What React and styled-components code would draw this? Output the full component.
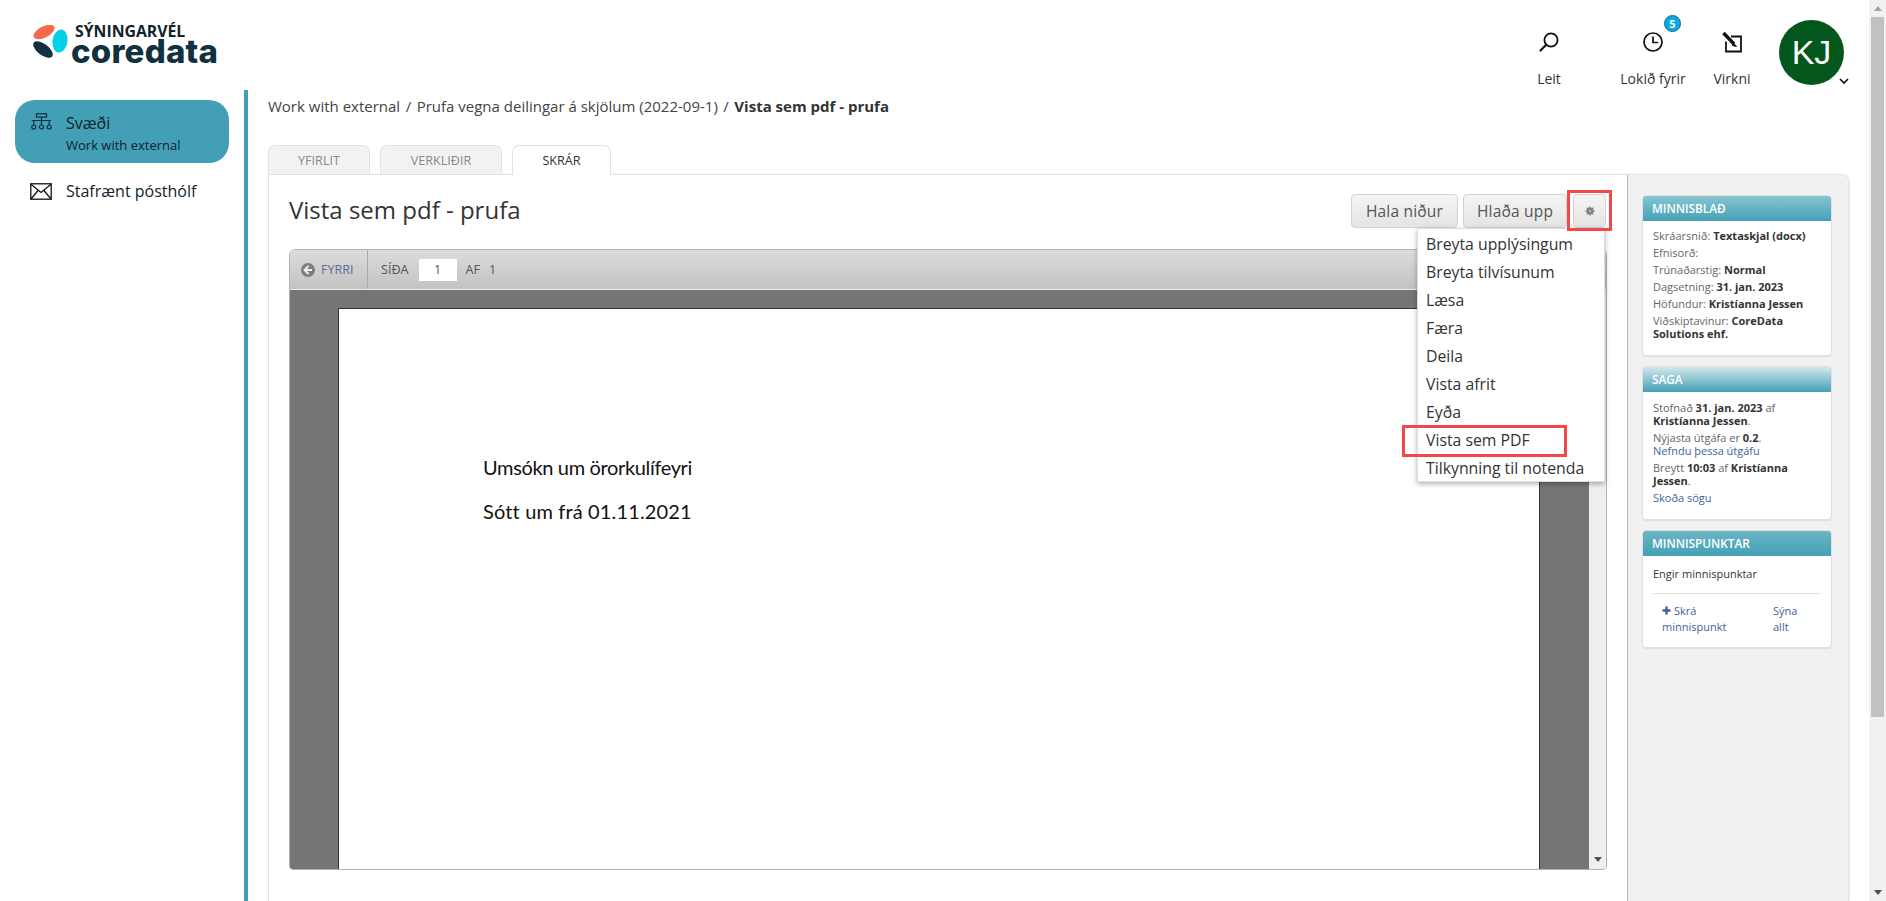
import React from 'react'
import styled, { createGlobalStyle } from 'styled-components'

const GlobalStyle = createGlobalStyle`
  html, body { margin: 0; padding: 0; height: 100%; overflow: hidden; background: #fff; }
  body { font-family: "Open Sans", "Noto Sans", sans-serif; color: #333; }
  * { box-sizing: border-box; }
`

const menuItems = ['Breyta upplýsingum', 'Breyta tilvísunum', 'Læsa', 'Færa', 'Deila', 'Vista afrit', 'Eyða', 'Vista sem PDF', 'Tilkynning til notenda']

const SearchIcon = () => (
  <svg width="22" height="22" viewBox="0 0 22 22" fill="none" stroke="#111" strokeWidth="1.8" strokeLinecap="round">
    <circle cx="13" cy="9" r="6.6" />
    <path d="M8.2 13.8 L2.5 19.5" strokeWidth="2.2" />
  </svg>
)

const ClockIcon = () => (
  <svg width="22" height="22" viewBox="0 0 22 22" fill="none" stroke="#111" strokeWidth="1.7" strokeLinecap="round">
    <circle cx="11" cy="11" r="9" />
    <path d="M11 6 V11.5 H15.5" />
  </svg>
)

const ActivityIcon = () => (
  <svg width="22" height="22" viewBox="0 0 22 22" fill="none" stroke="#111" strokeWidth="1.8">
    <path d="M10 5.5 H20 V20.5 H5 V10.5" />
    <path d="M2.5 2 L13 13" strokeWidth="3.4" />
    <path d="M12.5 12 L15.5 15.5 L11.5 14.5 Z" fill="#111" strokeWidth="1" />
  </svg>
)

const SitemapIcon = () => (
  <svg width="21" height="17" viewBox="0 0 21 17" fill="none" stroke="#10303c" strokeWidth="1.2">
    <rect x="5.5" y="0.7" width="10" height="3.4" />
    <path d="M10.5 4 V12 M0.7 7.5 H20 M2.8 7.5 V12 M18.2 7.5 V12" />
    <circle cx="2.8" cy="14" r="2" />
    <circle cx="10.5" cy="14" r="2" />
    <circle cx="18.2" cy="14" r="2" />
  </svg>
)

const MailIcon = () => (
  <svg width="22" height="17" viewBox="0 0 22 17" fill="none" stroke="#111" strokeWidth="1.3">
    <rect x="0.8" y="0.8" width="20.4" height="15.4" />
    <path d="M1 1.2 L11 9.5 L21 1.2 M1 16 L8 7.5 M21 16 L14 7.5" />
  </svg>
)

const GearIcon = () => (
  <svg width="10" height="10" viewBox="0 0 10 10">
    <circle cx="5" cy="5" r="3.4" fill="#808080" />
    <path d="M5 0.4 V9.6 M0.4 5 H9.6 M1.8 1.8 L8.2 8.2 M8.2 1.8 L1.8 8.2" stroke="#808080" strokeWidth="1.4" />
    <circle cx="5" cy="5" r="1" fill="#ccc" />
  </svg>
)

const BackIcon = () => (
  <svg width="14" height="14" viewBox="0 0 14 14">
    <circle cx="7" cy="7" r="7" fill="#7d7d7d" />
    <path d="M7.5 3 L3.5 7 L7.5 11 M4 7 H11" fill="none" stroke="#eee" strokeWidth="2" />
  </svg>
)

const PlusIcon = () => (
  <svg width="9" height="9" viewBox="0 0 9 9">
    <path d="M4.5 0.5 V8.5 M0.5 4.5 H8.5" stroke="#3f5f9f" strokeWidth="2.4" />
  </svg>
)

const Logo = () => (
  <LogoWrap>
    <svg width="39" height="36" viewBox="0 0 39 36">
      <ellipse cx="11" cy="7" rx="11.5" ry="5.6" fill="#f4694a" transform="rotate(-27 11 7)" />
      <ellipse cx="27" cy="16" rx="7.5" ry="11.6" fill="#04d0e8" transform="rotate(8 27 16)" />
      <ellipse cx="10" cy="24.5" rx="11.5" ry="5.6" fill="#12313f" transform="rotate(37 10 24.5)" />
    </svg>
    <LogoText>
      <LogoTop>SÝNINGARVÉL</LogoTop>
      <LogoName>coredata</LogoName>
    </LogoText>
  </LogoWrap>
)

const LogoWrap = styled.div`
  display: flex;
  align-items: flex-start;
  padding: 25px 0 0 33px;
`
const LogoText = styled.div`
  display: flex;
  flex-direction: column;
  margin-top: -1px;
`
const LogoTop = styled.div`
  font-size: 15.8px;
  font-weight: 700;
  line-height: 15px;
  color: #12232c;
  padding-left: 3px;
`
const LogoName = styled.div`
  font-family: Inter, sans-serif;
  font-size: 33px;
  font-weight: 800;
  line-height: 25px;
  color: #12313f;
  letter-spacing: 0.2px;
  margin-left: -1px;
`

const Page = styled.div`
  display: flex;
  width: 1886px;
  height: 901px;
  overflow: hidden;
`
const Shell = styled.div`
  flex: 1;
  display: flex;
  flex-direction: column;
  min-width: 0;
`
const Header = styled.header`
  height: 90px;
  display: flex;
  justify-content: space-between;
`
const Actions = styled.div`
  display: flex;
  padding-right: 25px;
`
const Action = styled.div`
  position: relative;
  width: ${p => p.$w}px;
  display: flex;
  flex-direction: column;
  align-items: center;
  padding-top: 31px;
  font-size: 14px;
  color: #333;
  span { margin-top: 17px; line-height: 18px; white-space: nowrap; }
  svg { display: block; }
`
const Badge = styled.div`
  position: absolute;
  top: 15px;
  left: ${p => p.$left}px;
  width: 17px;
  height: 17px;
  border-radius: 50%;
  background: #0ca9e2;
  border: 1px solid #0b6f96;
  color: #fff;
  font-size: 11px;
  font-weight: 700;
  line-height: 15px;
  text-align: center;
`
const AvatarWrap = styled.div`
  position: relative;
  margin: 20px 0 0 20px;
  width: 65px;
  height: 65px;
`
const Avatar = styled.div`
  width: 65px;
  height: 65px;
  border-radius: 50%;
  background: #03571c;
  color: #fff;
  font-family: "Liberation Sans", Arial, sans-serif;
  font-size: 34px;
  line-height: 65px;
  text-align: center;
`
const Chevron = styled.svg`
  position: absolute;
  right: -5px;
  bottom: 0;
`
const Body = styled.div`
  flex: 1;
  display: flex;
  min-height: 0;
`
const Sidebar = styled.nav`
  width: 244px;
  padding: 10px 15px;
  flex: none;
`
const NavItem = styled.div`
  height: ${p => (p.$active ? 63 : 42)}px;
  border-radius: 20px;
  background: ${p => (p.$active ? '#429fb5' : 'transparent')};
  color: #10232c;
  display: grid;
  grid-template-columns: 51px 1fr;
  padding: ${p => (p.$active ? '12px 0 8px 16px' : '17px 0 0 15px')};
  font-size: 16px;
  line-height: 22px;
  small { display: block; font-size: 13px; line-height: 18px; margin-top: 2px; }
  svg { margin-top: ${p => (p.$active ? 1 : 3)}px; }
  > div { margin-left: ${p => (p.$active ? -16 : -15)}px; }
`
const Content = styled.main`
  flex: 1;
  min-width: 0;
  display: flex;
  flex-direction: column;
  border-left: 4px solid #429fb5;
  padding: 0 20px 0 20px;
`
const Breadcrumb = styled.div`
  height: 55px;
  padding-top: 6px;
  font-size: 15px;
  line-height: 20px;
  color: #444;
  b { color: #333; font-weight: 700; }
  i { font-style: normal; margin: 0 5.5px; }
`
const Tabs = styled.div`
  display: flex;
  gap: 10px;
  height: 29px;
  position: relative;
  z-index: 1;
`
const Tab = styled.div`
  width: ${p => p.$w}px;
  height: ${p => (p.$active ? 30 : 29)}px;
  background: ${p => (p.$active ? '#fff' : '#f2f2f2')};
  border: 1px solid #e2e2e2;
  border-bottom: none;
  border-radius: 7px 7px 0 0;
  font-size: 12.6px;
  line-height: 29px;
  text-align: center;
  color: ${p => (p.$active ? '#333' : '#888')};
`
const Panel = styled.section`
  flex: 1;
  min-height: 0;
  display: flex;
  border: 1px solid #e2e2e2;
  border-bottom: none;
  border-radius: 0 8px 0 0;
  box-shadow: 1px 0 2px rgba(0, 0, 0, 0.08);
`
const PanelMain = styled.div`
  flex: 1;
  min-width: 0;
  padding: 21px 20px 31px 20px;
  display: flex;
  flex-direction: column;
  position: relative;
`
const TitleRow = styled.div`
  display: flex;
  justify-content: space-between;
  align-items: flex-start;
  height: 53px;
`
const Title = styled.h1`
  margin: 0;
  font-size: 24px;
  font-weight: 400;
  line-height: 28px;
  color: #333;
`
const ButtonRow = styled.div`
  display: flex;
  gap: 5px;
  margin-top: -2px;
  margin-right: 1px;
`
const Button = styled.div`
  position: relative;
  height: 34px;
  width: ${p => p.$w}px;
  margin-left: ${p => p.$gap || 0}px;
  border: 1px solid #d4d4d4;
  border-radius: 4px;
  background: linear-gradient(#f4f4f4, #e4e4e4);
  color: #555;
  font-size: 15.5px;
  letter-spacing: 0.2px;
  display: flex;
  align-items: center;
  justify-content: center;
`
const RedBox = styled.div`
  position: absolute;
  border: 3px solid #f44848;
  pointer-events: none;
  z-index: 5;
`
const GearMark = styled(RedBox)`
  left: -7px;
  top: -5px;
  width: 45px;
  height: 41px;
`
const Menu = styled.ul`
  position: absolute;
  z-index: 4;
  top: 53px;
  right: 22px;
  width: 188px;
  margin: 0;
  padding: 1px 0 0;
  height: 254px;
  list-style: none;
  background: #fff;
  border: 1px solid #ddd;
  box-shadow: 0 2px 5px rgba(0, 0, 0, 0.3);
`
const MenuItem = styled.li`
  position: relative;
  height: 28px;
  padding-left: 8px;
  font-size: 15.8px;
  line-height: 28px;
  color: #333;
  white-space: nowrap;
`
const PdfMark = styled(RedBox)`
  left: -16px;
  top: -1px;
  width: 165px;
  height: 32px;
`
const Viewer = styled.div`
  flex: 1;
  min-height: 0;
  display: flex;
  flex-direction: column;
  border: 1px solid #b2b2b2;
  border-radius: 6px 6px 4px 4px;
  overflow: hidden;
`
const ViewerBar = styled.div`
  flex: none;
  height: 40px;
  display: flex;
  align-items: center;
  background: linear-gradient(#dcdcdc, #c2c2c2);
  border-bottom: 1px solid #eee;
  font-size: 12.6px;
  color: #555;
`
const BarPrev = styled.div`
  height: 100%;
  width: 78px;
  display: flex;
  align-items: center;
  gap: 6px;
  padding-left: 11px;
  border-right: 1px solid #aaa;
  color: #5b6b95;
`
const PageField = styled.div`
  width: 38px;
  height: 22px;
  background: #fff;
  margin: 0 9px 0 10px;
  text-align: center;
  line-height: 22px;
  color: #6a3b86;
`
const BarLabel = styled.span`
  margin-left: ${p => p.$ml || 0}px;
`
const ViewerBody = styled.div`
  flex: 1;
  min-height: 0;
  display: flex;
`
const PageArea = styled.div`
  flex: 1;
  min-width: 0;
  background: #757575;
  padding: 18px 49px 0 48px;
`
const DocPage = styled.div`
  height: 100%;
  background: #fff;
  border: 1px solid #333;
  border-bottom: none;
  padding: 146px 0 0 144px;
  font-family: Lato, sans-serif;
  font-size: 20px;
  line-height: 24px;
  color: #111;
`
const DocLine = styled.p`
  margin: 0 0 20px;
  width: fit-content;
  letter-spacing: ${p => p.$ls}px;
`
const ViewerScroll = styled.div`
  flex: none;
  width: 17px;
  background: #efefef;
  display: flex;
  align-items: flex-end;
  justify-content: center;
  padding-bottom: 7px;
`
const Arrow = styled.div`
  width: 0;
  height: 0;
  border-left: 4px solid transparent;
  border-right: 4px solid transparent;
  border-${p => (p.$up ? 'bottom' : 'top')}: 5px solid ${p => p.$color};
`
const Aside = styled.aside`
  width: 221px;
  flex: none;
  background: #f1f1f1;
  border-left: 1px solid #b8b8b8;
  border-radius: 0 8px 0 0;
  padding: 20px 16px 0 14px;
  display: flex;
  flex-direction: column;
  gap: 10px;
`
const Card = styled.div`
  background: #fff;
  border: 1px solid #e0e0e0;
  border-radius: 4px;
  box-shadow: 0 1px 1px rgba(0, 0, 0, 0.08);
  height: ${p => p.$h}px;
  overflow: hidden;
`
const CardHead = styled.div`
  height: 26px;
  margin: -1px -1px 0;
  padding-left: 10px;
  background: linear-gradient(${p => p.$from}, #45a1b6);
  color: #fff;
  font-size: 11.8px;
  font-weight: 600;
  line-height: 26px;
`
const CardBody = styled.div`
  padding: ${p => p.$top}px 10px 0;
  font-size: 11px;
  line-height: 13px;
  color: #666;
  b { color: #333; font-weight: 700; }
  a { color: #3f5f9f; text-decoration: none; }
  p { margin: 0 0 4px; }
`
const Divider = styled.hr`
  margin: 13px 0 9px;
  border: none;
  border-top: 1px solid #e2e2e2;
`
const NoteLinks = styled.div`
  display: grid;
  grid-template-columns: 111px 1fr;
  padding-left: 9px;
  line-height: 16px;
  color: #3f5f9f;
`
const NoteLink = styled.div`
  max-width: ${p => p.$max}px;
  svg { margin-right: 3px; }
`
const PlainLine = styled.div`
  color: #333;
  padding-top: 4px;
`
const PageScroll = styled.div`
  flex: none;
  width: 17px;
  background: #f1f1f1;
  display: flex;
  flex-direction: column;
  align-items: center;
`
const ScrollEnd = styled.div`
  height: 17px;
  flex: none;
  display: flex;
  align-items: center;
  justify-content: center;
`
const ScrollThumb = styled.div`
  width: 13px;
  height: 700px;
  background: #c1c1c1;
`
const ScrollFill = styled.div`
  flex: 1;
`

export default function App() {
  return (
    <Page>
      <GlobalStyle />
      <Shell>
        <Header>
          <Logo />
          <Actions>
            <Action $w={104}><SearchIcon /><span>Leit</span></Action>
            <Action $w={104}>
              <ClockIcon />
              <Badge $left={63}>5</Badge>
              <span>Lokið fyrir</span>
            </Action>
            <Action $w={54}><ActivityIcon /><span>Virkni</span></Action>
            <AvatarWrap>
              <Avatar>KJ</Avatar>
              <Chevron width="10" height="7" viewBox="0 0 10 7" fill="none" stroke="#111" strokeWidth="1.6">
                <path d="M1 1 L5 5 L9 1" />
              </Chevron>
            </AvatarWrap>
          </Actions>
        </Header>
        <Body>
          <Sidebar>
            <NavItem $active>
              <SitemapIcon />
              <div>Svæði<small>Work with external</small></div>
            </NavItem>
            <NavItem>
              <MailIcon />
              <div>Stafrænt pósthólf</div>
            </NavItem>
          </Sidebar>
          <Content>
            <Breadcrumb>
              Work with external<i>/</i>Prufa vegna deilingar á skjölum (2022-09-1)<i>/</i><b>Vista sem pdf - prufa</b>
            </Breadcrumb>
            <Tabs>
              <Tab $w={102}>YFIRLIT</Tab>
              <Tab $w={122}>VERKLIÐIR</Tab>
              <Tab $w={99} $active>SKRÁR</Tab>
            </Tabs>
            <Panel>
              <PanelMain>
                <TitleRow>
                  <Title>Vista sem pdf - prufa</Title>
                  <ButtonRow>
                    <Button $w={107}>Hala niður</Button>
                    <Button $w={104}>Hlaða upp</Button>
                    <Button $w={33} $gap={1}>
                      <GearIcon />
                      <GearMark />
                    </Button>
                  </ButtonRow>
                </TitleRow>
                <Menu>
                  {menuItems.map(item => (
                    <MenuItem key={item}>
                      {item}
                      {item === 'Vista sem PDF' && <PdfMark />}
                    </MenuItem>
                  ))}
                </Menu>
                <Viewer>
                  <ViewerBar>
                    <BarPrev><BackIcon />FYRRI</BarPrev>
                    <BarLabel $ml={13}>SÍÐA</BarLabel>
                    <PageField>1</PageField>
                    <BarLabel>AF</BarLabel>
                    <BarLabel $ml={9}>1</BarLabel>
                  </ViewerBar>
                  <ViewerBody>
                    <PageArea>
                      <DocPage>
                        <DocLine $ls={-0.35}>Umsókn um örorkulífeyri</DocLine>
                        <DocLine $ls={0.15}>Sótt um frá 01.11.2021</DocLine>
                      </DocPage>
                    </PageArea>
                    <ViewerScroll><Arrow $color="#505050" /></ViewerScroll>
                  </ViewerBody>
                </Viewer>
              </PanelMain>
              <Aside>
                <Card $h={161}>
                  <CardHead $from="#8ac6d2">MINNISBLAÐ</CardHead>
                  <CardBody $top={8}>
                    <p>Skráarsnið: <b>Textaskjal (docx)</b></p>
                    <p>Efnisorð:</p>
                    <p>Trúnaðarstig: <b>Normal</b></p>
                    <p>Dagsetning: <b>31. jan. 2023</b></p>
                    <p>Höfundur: <b>Kristíanna Jessen</b></p>
                    <p>Viðskiptavinur: <b>CoreData Solutions ehf.</b></p>
                  </CardBody>
                </Card>
                <Card $h={154}>
                  <CardHead $from="#d8eaee">SAGA</CardHead>
                  <CardBody $top={9}>
                    <p>Stofnað <b>31. jan. 2023</b> af <b>Kristíanna Jessen</b>.</p>
                    <p>Nýjasta útgáfa er <b>0.2</b>.<br /><a>Nefndu þessa útgáfu</a></p>
                    <p>Breytt <b>10:03</b> af <b>Kristíanna Jessen</b>.</p>
                    <p><a>Skoða sögu</a></p>
                  </CardBody>
                </Card>
                <Card $h={118}>
                  <CardHead $from="#6cb5c5">MINNISPUNKTAR</CardHead>
                  <CardBody $top={7}>
                    <PlainLine>Engir minnispunktar</PlainLine>
                    <Divider />
                    <NoteLinks>
                      <NoteLink $max={80}><PlusIcon />Skrá minnispunkt</NoteLink>
                      <NoteLink $max={36}>Sýna allt</NoteLink>
                    </NoteLinks>
                  </CardBody>
                </Card>
              </Aside>
            </Panel>
          </Content>
        </Body>
      </Shell>
      <PageScroll>
        <ScrollEnd><Arrow $up $color="#a3a3a3" /></ScrollEnd>
        <ScrollThumb />
        <ScrollFill />
        <ScrollEnd><Arrow $color="#505050" /></ScrollEnd>
      </PageScroll>
    </Page>
  )
}
